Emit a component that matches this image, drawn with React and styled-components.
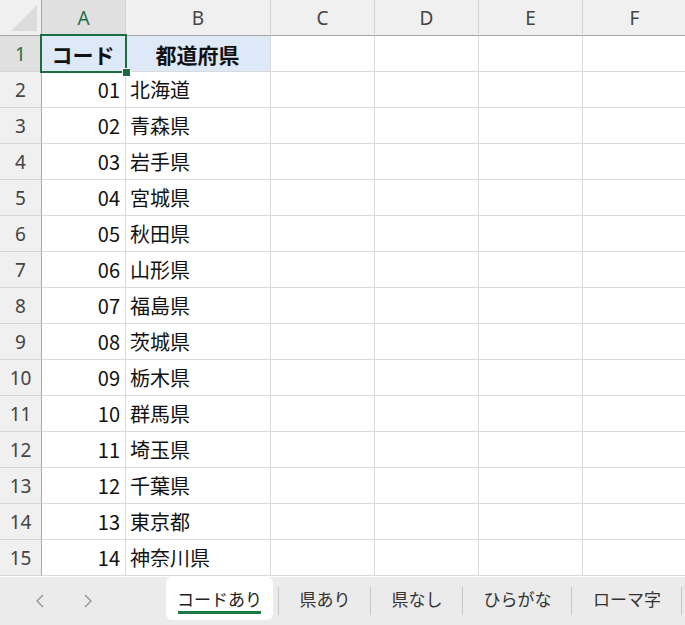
import React from "react";
import styled, { createGlobalStyle, css } from "styled-components";

const Global = createGlobalStyle`
  html, body { margin: 0; padding: 0; background: #ffffff; }
  body { font-family: "Noto Sans CJK JP", "Noto Sans", sans-serif; }
`;

const Window = styled.div`
  width: 685px;
  height: 625px;
  overflow: hidden;
  display: flex;
  flex-direction: column;
  background: #ffffff;
`;

const Sheet = styled.div`
  flex: 0 0 577px;
  overflow: hidden;
  display: grid;
  grid-template-columns: 42px 84px 145px 104px 104px 104px 104px;
  grid-template-rows: 36px;
  grid-auto-rows: 36px;
  width: 687px;
`;

const Corner = styled.div`
  box-sizing: border-box;
  background: #f0f0f0;
  border-right: 1px solid #a8a8a8;
  border-bottom: 1px solid #a8a8a8;
  position: relative;
  &::after {
    content: "";
    position: absolute;
    right: 4px;
    bottom: 4px;
    width: 0;
    height: 0;
    border-left: 26px solid transparent;
    border-bottom: 26px solid #dcdcdc;
  }
`;

const ColHead = styled.div`
  box-sizing: border-box;
  background: ${(p) => (p.$sel ? "#e0e0e0" : "#f0f0f0")};
  color: ${(p) => (p.$sel ? "#1e7145" : "#444444")};
  border-right: 1px solid #d4d4d4;
  border-bottom: 1px solid #a8a8a8;
  display: flex;
  align-items: center;
  justify-content: center;
  font-family: "Noto Sans", sans-serif;
  font-size: 19px;
  padding-top: 1px;
`;

const RowHead = styled.div`
  box-sizing: border-box;
  background: ${(p) => (p.$sel ? "#e0e0e0" : "#f0f0f0")};
  color: ${(p) => (p.$sel ? "#1e7145" : "#444444")};
  border-right: 1px solid #a8a8a8;
  border-bottom: 1px solid #d4d4d4;
  display: flex;
  align-items: center;
  justify-content: center;
  font-family: "Noto Sans", sans-serif;
  font-size: 19px;
`;

const Cell = styled.div`
  box-sizing: border-box;
  border-right: 1px solid #dadada;
  border-bottom: 1px solid #dadada;
  display: flex;
  align-items: center;
  font-size: 20px;
  color: #111111;
  white-space: nowrap;
  background: ${(p) => (p.$head ? "#dde9f6" : "#ffffff")};
  justify-content: ${(p) =>
    p.$align === "right" ? "flex-end" : p.$align === "center" ? "center" : "flex-start"};
  padding: 0 5px 0 4px;
  ${(p) =>
    p.$head &&
    css`
      font-weight: 700;
      font-size: 21px;
    `}
`;

const ActiveCell = styled(Cell)`
  position: relative;
  &::before {
    content: "";
    position: absolute;
    left: -2px;
    top: -2px;
    right: -2px;
    bottom: -2px;
    border: 2px solid #1d6b40;
    pointer-events: none;
  }
  &::after {
    content: "";
    position: absolute;
    right: -6px;
    bottom: -6px;
    width: 9px;
    height: 9px;
    background: #1d6b40;
    border: 1px solid #ffffff;
    box-sizing: border-box;
  }
`;

const TabBar = styled.div`
  flex: 1;
  background: #ebebeb;
  display: flex;
  align-items: stretch;
  font-size: 17px;
  color: #333333;
`;

const Nav = styled.div`
  width: 166px;
  display: flex;
  align-items: center;
  padding-left: 30px;
  gap: 28px;
  box-sizing: border-box;
`;

const Arrow = styled.svg`
  width: 20px;
  height: 20px;
  stroke: #9a9a9a;
  stroke-width: 1.5;
  fill: none;
`;

const Tab = styled.div`
  position: relative;
  display: flex;
  align-items: center;
  justify-content: center;
  box-sizing: border-box;
  width: ${(p) => p.$w}px;
  margin-bottom: 5px;
  white-space: nowrap;
  ${(p) =>
    p.$active
      ? css`
          background: #ffffff;
          border-radius: 6px;
          color: #222222;
        `
      : css`
          &::after {
            content: "";
            position: absolute;
            right: 0;
            top: 10px;
            bottom: 5px;
            width: 1px;
            background: #c8c8c8;
          }
        `}
`;

const Underline = styled.span`
  position: absolute;
  left: 12px;
  right: 12px;
  bottom: 6px;
  height: 3px;
  background: #1a7a43;
`;

const Gap = styled.div`
  position: relative;
  width: 6px;
  &::after {
    content: "";
    position: absolute;
    right: 0;
    top: 10px;
    bottom: 10px;
    width: 1px;
    background: #c8c8c8;
  }
`;

const prefs = [
  ["01", "北海道"],
  ["02", "青森県"],
  ["03", "岩手県"],
  ["04", "宮城県"],
  ["05", "秋田県"],
  ["06", "山形県"],
  ["07", "福島県"],
  ["08", "茨城県"],
  ["09", "栃木県"],
  ["10", "群馬県"],
  ["11", "埼玉県"],
  ["12", "千葉県"],
  ["13", "東京都"],
  ["14", "神奈川県"],
];

const cols = ["A", "B", "C", "D", "E", "F"];
const tabs = [
  { label: "県あり", w: 92 },
  { label: "県なし", w: 92 },
  { label: "ひらがな", w: 109 },
  { label: "ローマ字", w: 110 },
];

export default function App() {
  return (
    <>
      <Global />
      <Window>
        <Sheet>
          <Corner />
          {cols.map((c) => (
            <ColHead key={c} $sel={c === "A"}>
              {c}
            </ColHead>
          ))}
          <RowHead $sel>1</RowHead>
          <ActiveCell $head $align="center">コード</ActiveCell>
          <Cell $head $align="center">都道府県</Cell>
          <Cell />
          <Cell />
          <Cell />
          <Cell />
          {prefs.map(([code, name], i) => (
            <React.Fragment key={code}>
              <RowHead>{i + 2}</RowHead>
              <Cell $align="right">{code}</Cell>
              <Cell>{name}</Cell>
              <Cell />
              <Cell />
              <Cell />
              <Cell />
            </React.Fragment>
          ))}
        </Sheet>
        <TabBar>
          <Nav>
            <Arrow viewBox="0 0 20 20">
              <path d="M13 4 L7 10 L13 16" />
            </Arrow>
            <Arrow viewBox="0 0 20 20">
              <path d="M7 4 L13 10 L7 16" />
            </Arrow>
          </Nav>
          <Tab $active $w={107}>
            コードあり
            <Underline />
          </Tab>
          <Gap />
          {tabs.map((t) => (
            <Tab key={t.label} $w={t.w}>
              {t.label}
            </Tab>
          ))}
        </TabBar>
      </Window>
    </>
  );
}
